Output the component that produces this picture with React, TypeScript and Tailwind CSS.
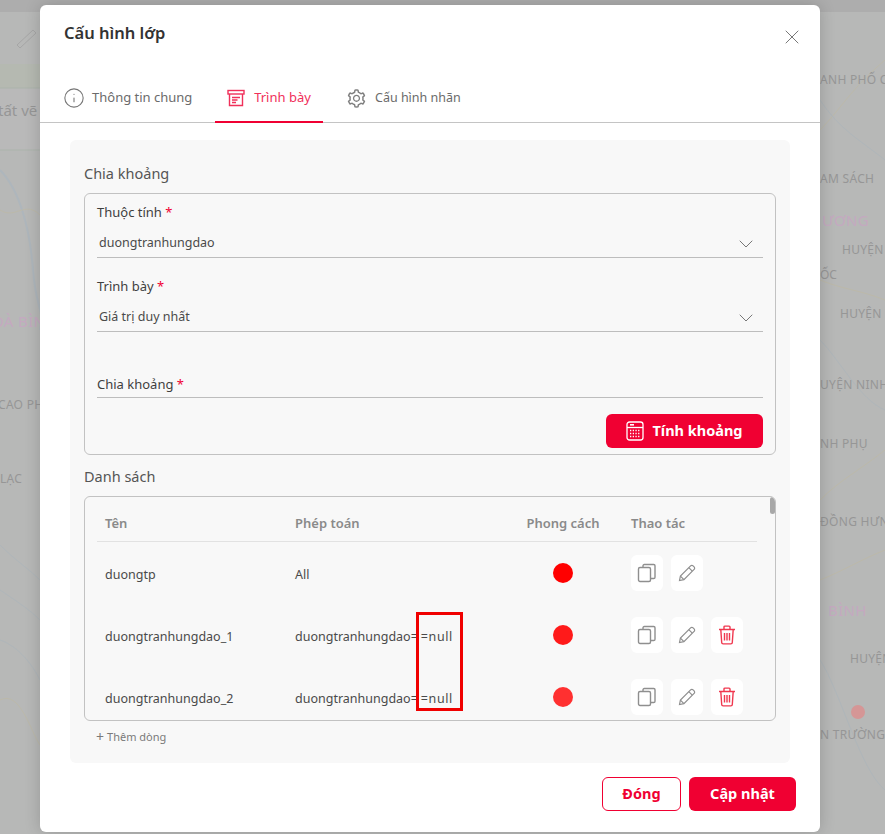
import { ChevronDown, Info, X } from 'lucide-react';
import { AiOutlineSetting } from 'react-icons/ai';

const mapLabels = [
  { text: 'tất vẽ', className: 'left-[-2px] top-[99px] text-[15px]' },
  { text: 'OÀ BÌNH', className: 'left-[-8px] top-[310px] text-[15px] tracking-wide text-[#c4a9c0]' },
  { text: 'CAO PH', className: 'left-[-2px] top-[396px] text-[12px] tracking-wide' },
  { text: 'LẠC', className: 'left-0 top-[470px] text-[12px] tracking-wide' },
  { text: 'ANH PHỐ CHÍ', className: 'left-[820px] top-[71px] text-[12px] tracking-wide' },
  { text: 'AM SÁCH', className: 'left-[820px] top-[170px] text-[12px] tracking-wide' },
  { text: 'ƯƠNG', className: 'left-[822px] top-[209px] text-[15px] tracking-wide text-[#c4a9c0]' },
  { text: 'HUYỆN T', className: 'left-[842px] top-[241px] text-[12px] tracking-wide' },
  { text: 'ỐC', className: 'left-[820px] top-[266px] text-[12px]' },
  { text: 'HUYỆN T', className: 'left-[840px] top-[305px] text-[12px] tracking-wide' },
  { text: 'UYỆN NINH', className: 'left-[820px] top-[376px] text-[12px] tracking-wide' },
  { text: 'NH PHỤ', className: 'left-[820px] top-[435px] text-[12px] tracking-wide' },
  { text: 'ĐỒNG HƯNG', className: 'left-[820px] top-[513px] text-[12px] tracking-wide' },
  { text: 'BÌNH', className: 'left-[828px] top-[599px] text-[15px] tracking-wide text-[#c4a9c0]' },
  { text: 'HUYỆN', className: 'left-[850px] top-[650px] text-[12px] tracking-wide' },
  { text: 'N TRƯỜNG', className: 'left-[820px] top-[726px] text-[12px] tracking-wide' },
];

const rows = [
  { name: 'duongtp', op: 'All', opEnd: '', dot: 'bg-[#ff0000]', canDelete: false },
  { name: 'duongtranhungdao_1', op: 'duongtranhungdao=', opEnd: '=null', dot: 'bg-[#ff1a1a]', canDelete: true },
  { name: 'duongtranhungdao_2', op: 'duongtranhungdao=', opEnd: '=null', dot: 'bg-[#ff3030]', canDelete: true },
];

function ArchiveIcon() {
  return (
    <svg width="18" height="18" viewBox="0 0 18 18" fill="none" stroke="currentColor" strokeWidth="1.4">
      <rect x="1" y="1.5" width="16" height="3.5" />
      <path d="M2.5 5v11.5h13V5" />
      <path d="M5 8.5h8M5 11h5.5M5 13.5h4" />
    </svg>
  );
}

function CopyIcon() {
  return (
    <svg width="20" height="20" viewBox="0 0 20 20" fill="none" stroke="currentColor" strokeWidth="1.4">
      <rect x="1.5" y="4.5" width="12" height="14" rx="1.5" />
      <path d="M6 4.5V2.8c0-.7.5-1.3 1.3-1.3h9.4c.8 0 1.3.6 1.3 1.3v11.4c0 .8-.5 1.3-1.3 1.3h-3.2" />
    </svg>
  );
}

function PencilIcon() {
  return (
    <svg width="18" height="18" viewBox="0 0 18 18" fill="none" stroke="currentColor" strokeWidth="1.2">
      <path d="M1.5 16.5l.9-4.4L12.6 1.9c.7-.7 1.8-.7 2.5 0l1 1c.7.7.7 1.8 0 2.5L5.9 15.6l-4.4.9z" />
      <path d="M10.8 3.7l3.5 3.5M2.4 12.1l3.5 3.5" />
    </svg>
  );
}

function TrashIcon() {
  return (
    <svg width="18" height="20" viewBox="0 0 18 20" fill="none" stroke="currentColor" strokeWidth="1.4">
      <path d="M1 4.5h16M6 4.5V2c0-.5.4-.9.9-.9h4.2c.5 0 .9.4.9.9v2.5" />
      <path d="M2.8 4.5l.9 13c0 .8.7 1.4 1.5 1.4h7.6c.8 0 1.5-.6 1.5-1.4l.9-13" />
      <path d="M6.5 8v7.5M9 8v7.5M11.5 8v7.5" />
    </svg>
  );
}

function CalculatorIcon() {
  return (
    <svg width="18" height="20" viewBox="0 0 18 20" fill="none" stroke="currentColor" strokeWidth="1.3">
      <rect x="1" y="1" width="16" height="18" rx="2.5" />
      <path d="M1 6.5h16" />
      <path d="M4 3.8h4" strokeWidth="1.6" />
      <path d="M4 9.5h10M4 12.5h10M4 15.5h10" strokeDasharray="1.3 1.4" strokeWidth="1.6" />
    </svg>
  );
}

function IconButton({ children, danger }: { children: React.ReactNode; danger?: boolean }) {
  return (
    <button
      className={`flex h-9 w-8 items-center justify-center rounded-md bg-white ${
        danger ? 'text-[#f0384f]' : 'text-[#8f8f8f]'
      }`}
    >
      {children}
    </button>
  );
}

function Required() {
  return <span className="text-[#f00032]"> *</span>;
}

function SelectField({ label, value }: { label: string; value: string }) {
  return (
    <div className="flex flex-col">
      <label className="text-[13px] leading-5 text-[#3f3f3f]">
        {label}
        <Required />
      </label>
      <div className="mt-[9px] flex h-[27px] items-center justify-between border-b border-[#bdbdbd] pb-[1px] pl-[2px] pr-[5px] text-[12.5px] text-[#4a4a4a]">
        <span>{value}</span>
        <ChevronDown size={24} strokeWidth={1} className="text-[#777]" />
      </div>
    </div>
  );
}

function Tabs() {
  return (
    <div className="flex h-[50px] items-start border-b border-[#c4c4c4] pl-6">
      <div className="flex h-[49px] w-[127px] items-center gap-2 whitespace-nowrap pt-[1px] text-[#6b6b6b]">
        <Info size={22} strokeWidth={1.2} className="-mx-[1px] shrink-0 text-[#777]" />
        <span className="text-[13px]">Thông tin chung</span>
      </div>
      <div className="ml-[24px] flex h-[50px] w-[108px] items-center justify-center gap-[9px] border-b-2 border-[#f00032] pt-[1px] text-[#f0305a]">
        <ArchiveIcon />
        <span className="text-[13px]">Trình bày</span>
      </div>
      <div className="ml-[23px] flex h-[49px] items-center gap-2 pt-[1px] text-[#6b6b6b]">
        <AiOutlineSetting size={21} className="text-[#808080]" />
        <span className="text-[12.5px]">Cấu hình nhãn</span>
      </div>
    </div>
  );
}

function RuleTable() {
  return (
    <div className="relative mt-[10px] h-[225px] overflow-hidden rounded-md border border-[#c2c2c2]">
      <div className="pl-[12px] pr-[18px]">
        <div className="grid h-[45px] grid-cols-[190px_212px_112px_1fr] items-center border-b border-[#e2e2e2] pl-[8px] pt-[10px] text-[13px] font-semibold text-[#8a8a8a]">
          <span>Tên</span>
          <span>Phép toán</span>
          <span className="text-center">Phong cách</span>
          <span className="pl-3">Thao tác</span>
        </div>
        {rows.map((row) => (
          <div
            key={row.name}
            className="grid h-[62px] grid-cols-[190px_212px_112px_1fr] items-center pl-[8px] text-[12.5px] text-[#4a4a4a]"
          >
            <span className="pt-[4px]">{row.name}</span>
            <span className="pt-[4px]">
              {row.op}
              {row.opEnd && <span className="ml-[3px] tracking-[0.6px]">{row.opEnd}</span>}
            </span>
            <span className={`mx-auto size-5 rounded-full ${row.dot}`} />
            <div className="flex gap-2 pl-3">
              <IconButton>
                <CopyIcon />
              </IconButton>
              <IconButton>
                <PencilIcon />
              </IconButton>
              {row.canDelete && (
                <IconButton danger>
                  <TrashIcon />
                </IconButton>
              )}
            </div>
          </div>
        ))}
      </div>
      {/* scrollbar thumb */}
      <div className="absolute right-0 top-0 h-[17px] w-[5px] rounded-full bg-[#a8a8a8]" />
      {/* annotation drawn on the screenshot */}
      <div className="absolute left-[331px] top-[115px] h-[99px] w-[47px] border-[3px] border-[#f00000]" />
    </div>
  );
}

export default function App() {
  return (
    <div
      className="relative h-[834px] w-[885px] overflow-hidden bg-[#b7b8b7]"
      style={{ fontFamily: '"Noto Sans", "Open Sans", sans-serif' }}
    >
      {/* map dimmed behind the dialog */}
      <svg className="absolute inset-0" width="885" height="834" fill="none" strokeWidth="1">
        <rect x="0" y="0" width="885" height="12" fill="#adadad" />
        <rect x="0" y="64" width="40" height="24" fill="#b5b9b1" />
        <rect x="0" y="88" width="40" height="62" fill="#b9b9b9" />
        <path d="M0 88H40M0 150H40" stroke="#abb3ab" />
        <path d="M17 45L33 30M20 48L36 33M17 45L20 48M33 30L36 33" stroke="#a6a6a6" />
        <path d="M0 170C20 190 30 230 33 270S45 310 40 330" stroke="#aeb6bc" strokeWidth="2" />
        <path d="M0 210C15 220 25 200 40 215M0 700C20 690 30 730 40 745" stroke="#bcb9aa" />
        <path d="M0 545C15 560 30 570 40 580M0 590C15 600 30 610 40 620M0 640C15 645 30 660 40 680" stroke="#afb6ba" />
        <path d="M820 130C840 110 850 90 885 60M820 280C845 290 860 290 885 300M820 500C840 480 860 470 885 450M820 580C845 570 860 560 885 550" stroke="#bcb9aa" />
        <path d="M820 100C840 130 860 140 885 160M820 340C840 360 860 400 885 410M820 660C840 690 860 770 885 790" stroke="#afb6ba" />
        <circle cx="858" cy="712" r="7" fill="#d59696" />
      </svg>
      {mapLabels.map((label) => (
        <span
          key={label.text + label.className}
          className={`absolute whitespace-nowrap text-[#969696] ${label.className}`}
        >
          {label.text}
        </span>
      ))}

      <div className="absolute left-[40px] top-[5px] flex h-[827px] w-[780px] flex-col rounded-md bg-white shadow-[0_0_16px_rgba(0,0,0,0.18)]">
        <div className="flex h-[68px] items-start justify-between pl-6 pr-4">
          <h1 className="mt-[16px] text-[16.5px] font-semibold text-[#333]">Cấu hình lớp</h1>
          <X size={24} strokeWidth={1} className="mt-[20px] text-[#777]" />
        </div>
        <Tabs />

        <div className="mx-[30px] mt-[17px] h-[623px] rounded-md bg-[#f8f8f8] px-[14px] pt-[23px]">
          <h2 className="text-[14.5px] leading-5 text-[#555]">Chia khoảng</h2>
          <div className="mt-[10px] flex h-[262px] flex-col rounded-md border border-[#c2c2c2] px-3 pt-[8px]">
            <div className="flex flex-col gap-[18px]">
              <SelectField label="Thuộc tính" value="duongtranhungdao" />
              <SelectField label="Trình bày" value="Giá trị duy nhất" />
            </div>
            <div className="mt-[42px] h-[24px] border-b border-[#bdbdbd] text-[13px] leading-5 text-[#3f3f3f]">
              Chia khoảng
              <Required />
            </div>
            <button className="ml-auto mt-[16px] flex h-[34px] w-[157px] items-center justify-center gap-2 rounded-md bg-[#f00032] text-[14.5px] font-bold text-white">
              <CalculatorIcon />
              Tính khoảng
            </button>
          </div>

          <h2 className="mt-[11px] text-[14.5px] leading-5 text-[#555]">Danh sách</h2>
          <RuleTable />

          <div className="mt-[8px] flex items-center gap-[3px] pl-[12px] text-[11px] leading-4 text-[#7a7a7a]">
            <span className="text-[14px] leading-4">+</span>
            Thêm dòng
          </div>
        </div>

        <div className="mt-[14px] flex justify-end gap-2 pr-[24px]">
          <button className="h-[34px] w-[79px] rounded-md border border-[#f00032] bg-white text-[14.5px] font-bold text-[#f00032]">
            Đóng
          </button>
          <button className="h-[34px] w-[107px] rounded-md bg-[#f00032] text-[14.5px] font-bold text-white">
            Cập nhật
          </button>
        </div>
      </div>
    </div>
  );
}
